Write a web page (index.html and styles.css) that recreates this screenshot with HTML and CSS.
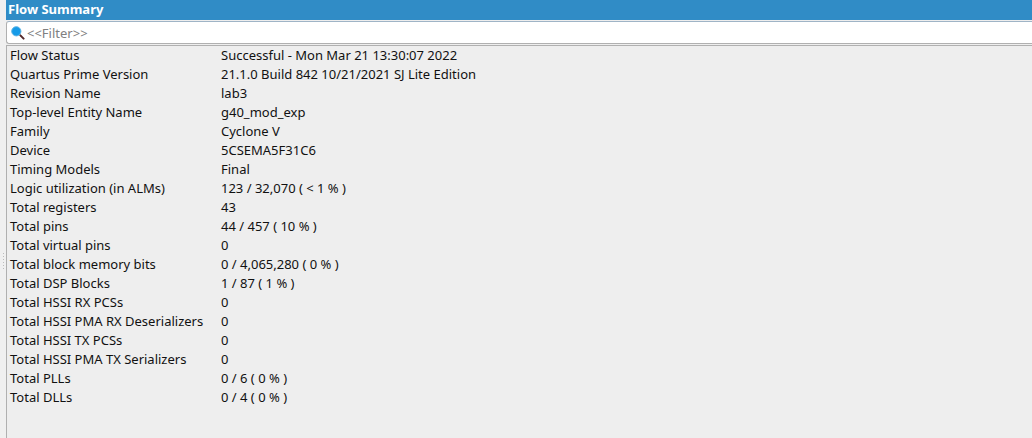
FILE: index.html
```html
<!DOCTYPE html>
<html lang="en">
<head>
<meta charset="utf-8">
<title>Flow Summary</title>
<link rel="stylesheet" href="styles.css">
</head>
<body>
<div class="window">
<div class="splitter"><svg class="grip" viewBox="0 0 3 18" aria-hidden="true"><path d="M1 1h1v1h-1zM1 4h1v1h-1zM1 7h1v1h-1zM1 10h1v1h-1zM1 13h1v1h-1zM1 16h1v1h-1z" fill="#bcbcbc"/></svg></div>
<main class="panel">
<h1 class="title">Flow Summary</h1>
<label class="filter">
<svg class="filter-icon" viewBox="0 0 14 14" aria-hidden="true"><path d="M8.5 8.5l1.5 1.5" stroke="#777" stroke-width="1.6"/><path d="M9.6 9.6l3 3" stroke="#54282a" stroke-width="2" stroke-linecap="round"/><circle cx="5.3" cy="5.3" r="4.6" fill="#169be8" stroke="#58b2e6" stroke-width="1"/></svg>
<input class="filter-input" type="text" placeholder="&lt;&lt;Filter&gt;&gt;" aria-label="Filter">
</label>
<div class="report">
<table class="summary">
<tbody>
<tr><th scope="row">Flow Status</th><td>Successful - Mon Mar 21 13:30:07 2022</td></tr>
<tr><th scope="row">Quartus Prime Version</th><td>21.1.0 Build 842 10/21/2021 SJ Lite Edition</td></tr>
<tr><th scope="row">Revision Name</th><td>lab3</td></tr>
<tr><th scope="row">Top-level Entity Name</th><td>g40_mod_exp</td></tr>
<tr><th scope="row">Family</th><td>Cyclone V</td></tr>
<tr><th scope="row">Device</th><td>5CSEMA5F31C6</td></tr>
<tr><th scope="row">Timing Models</th><td>Final</td></tr>
<tr><th scope="row">Logic utilization (in ALMs)</th><td>123 / 32,070 ( &lt; 1 % )</td></tr>
<tr><th scope="row">Total registers</th><td>43</td></tr>
<tr><th scope="row">Total pins</th><td>44 / 457 ( 10 % )</td></tr>
<tr><th scope="row">Total virtual pins</th><td>0</td></tr>
<tr><th scope="row">Total block memory bits</th><td>0 / 4,065,280 ( 0 % )</td></tr>
<tr><th scope="row">Total DSP Blocks</th><td>1 / 87 ( 1 % )</td></tr>
<tr><th scope="row">Total HSSI RX PCSs</th><td>0</td></tr>
<tr><th scope="row">Total HSSI PMA RX Deserializers</th><td>0</td></tr>
<tr><th scope="row">Total HSSI TX PCSs</th><td>0</td></tr>
<tr><th scope="row">Total HSSI PMA TX Serializers</th><td>0</td></tr>
<tr><th scope="row">Total PLLs</th><td>0 / 6 ( 0 % )</td></tr>
<tr><th scope="row">Total DLLs</th><td>0 / 4 ( 0 % )</td></tr>
</tbody>
</table>
</div>
</main>
</div>
</body>
</html>
```
FILE: styles.css
```css
* { box-sizing: border-box; }
body { margin: 0; background: #eeeeee; color: #111; font: 13px/19px "Noto Sans", sans-serif; }
.window { display: flex; min-height: 100vh; }
.splitter { flex: none; width: 6px; padding: 252px 0 0 2px; background: #f0f0f0; }
.grip { display: block; width: 3px; height: 18px; }
.panel { flex: 1; min-width: 0; display: flex; flex-direction: column; }
.title { margin: 0; padding: 0 2px; height: 20px; font-size: 13px; line-height: 19px; font-weight: 700; color: #fff; background: #308cc6; }
.filter { display: flex; align-items: center; height: 23px; margin: 1px 0; padding-left: 4px; gap: 2px; background: #fff; border: 1px solid #b0b0b0; border-top-color: #9fb4c6; border-right: 0; border-radius: 3px 0 0 3px; }
.filter-icon { width: 14px; height: 14px; fill: none; }
.filter-input { flex: 1; min-width: 0; height: 21px; border: 0; padding: 0; outline: 0; background: transparent; color: inherit; font: inherit; }
.filter-input::placeholder { color: #808080; opacity: 1; }
.report { flex: 1; border-left: 1px solid #b0b0b0; border-top: 1px solid #b0b0b0; }
.summary { border-collapse: collapse; }
.summary th, .summary td { padding: 0 3px; text-align: left; font-weight: 400; white-space: nowrap; }
.summary th { width: 211px; }
```
